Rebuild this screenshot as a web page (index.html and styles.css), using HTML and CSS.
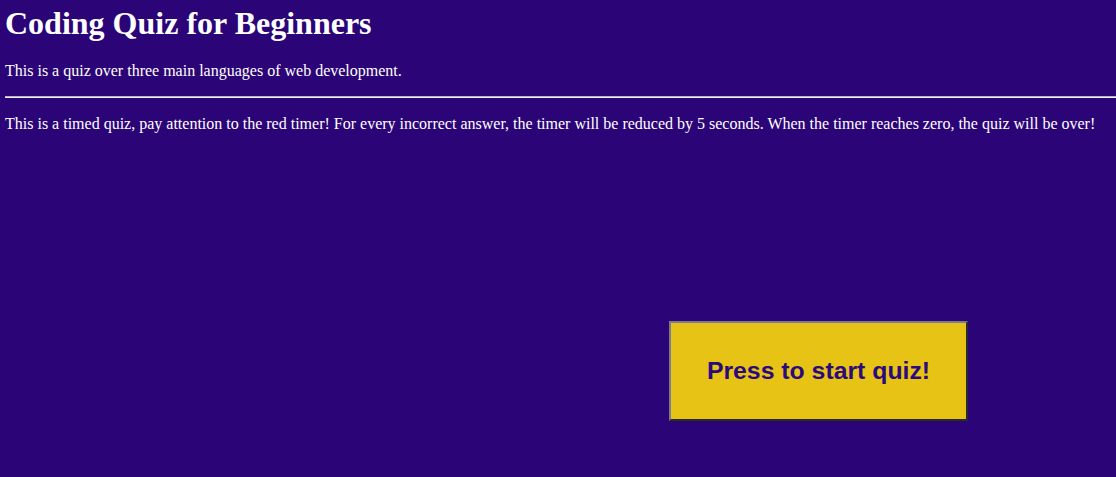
FILE: index.html
```html
<!DOCTYPE html>
<html lang="en">
<head>
<meta charset="utf-8">
<title>Coding Quiz for Beginners</title>
<link rel="stylesheet" href="styles.css">
</head>
<body>
  <header class="intro">
    <h1 class="title">Coding Quiz for Beginners</h1>
    <p class="text">This is a quiz over three main languages of web development.</p>
  </header>
  <hr class="divider">
  <p class="text">This is a timed quiz, pay attention to the red timer! For every incorrect answer, the timer will be reduced by 5 seconds. When the timer reaches zero, the quiz will be over!</p>
  <div class="start-area">
    <button class="start-btn" type="button">Press to start quiz!</button>
  </div>
</body>
</html>
```

FILE: styles.css
```css
html, body {
  height: 100%;
}
body {
  margin: 0;
  padding: 5px 0 0 5px;
  box-sizing: border-box;
  background: #2b0577;
  color: #ffffff;
  font-family: "Liberation Serif", "Times New Roman", serif;
  overflow: hidden;
}
.title {
  margin: 0 0 20px 0;
  font-size: 32px;
  font-weight: bold;
  line-height: 37px;
}
.text {
  margin: 16px 0;
  font-size: 16px;
  line-height: 18px;
}
.divider {
  margin: 15px 0 17px 0;
  border: 0;
  border-top: 1px solid #b9b5c4;
  border-bottom: 1px solid #eeeeee;
  height: 0;
}
.start-area {
  padding: 172px 0 0 664px;
}
.start-btn {
  width: 299px;
  height: 100px;
  background: #e6c314;
  color: #2d0a7c;
  font-family: "Liberation Sans", Arial, sans-serif;
  font-weight: bold;
  font-size: 24.8px;
  border-style: solid;
  border-width: 2px;
  border-color: #7c7b8a #2a2a2a #2a2a2a #7c7b8a;
  padding: 0;
  cursor: pointer;
}
```
